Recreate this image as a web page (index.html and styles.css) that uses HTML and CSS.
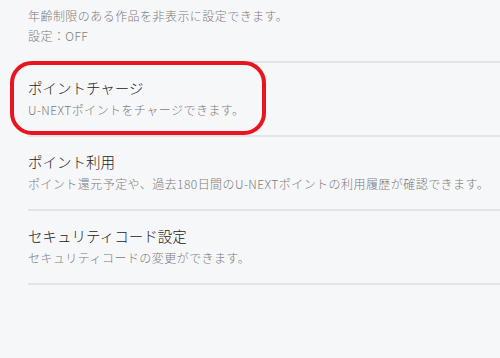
FILE: index.html
```html
<!DOCTYPE html>
<html>
<head>
<meta charset="utf-8">
<meta name="viewport" content="width=device-width, initial-scale=1.0">
<title>設定</title>
<link rel="stylesheet" href="styles.css">
</head>
<body>

  <div class="settings">
    <div class="setting-top">
      <p class="setting-desc">年齢制限のある作品を非表示に設定できます。</p>
      <p class="setting-desc">設定：OFF</p>
    </div>

    <div class="setting-item">
      <div class="highlight"></div>
      <p class="setting-title">ポイントチャージ</p>
      <p class="setting-desc">U-NEXTポイントをチャージできます。</p>
    </div>

    <div class="setting-item">
      <p class="setting-title">ポイント利用</p>
      <p class="setting-desc">ポイント還元予定や、過去180日間のU-NEXTポイントの利用履歴が確認できます。</p>
    </div>

    <div class="setting-item">
      <p class="setting-title">セキュリティコード設定</p>
      <p class="setting-desc">セキュリティコードの変更ができます。</p>
    </div>
  </div>

</body>
</html>
```

FILE: styles.css
```css
html, body {
  height: 100%;
  margin: 0;
  padding: 0;
  overflow: hidden;
}

body {
  background: #f6f7f9;
  font-family: "Noto Sans CJK JP", "Noto Sans", sans-serif;
}

p {
  margin: 0;
}

.settings {
  margin-left: 28px;
}

.setting-top {
  padding: 6px 0 15px;
}

.setting-top .setting-desc {
  line-height: 20px;
}

.setting-item {
  position: relative;
  border-top: 2px solid #e3e4e7;
  padding: 14px 0;
}

.setting-item:last-child {
  border-bottom: 2px solid #e3e4e7;
}

.setting-title {
  font-size: 14.5px;
  font-weight: 300;
  line-height: 22px;
  color: #222;
}

.setting-desc {
  font-size: 12px;
  font-weight: 300;
  line-height: 22px;
  letter-spacing: 0.45px;
  color: #7c7c7c;
  white-space: nowrap;
}

/* red marker round the charge item */
.highlight {
  position: absolute;
  top: -2px;
  left: -18px;
  width: 248px;
  height: 66px;
  border: 4px solid #e8141e;
  border-radius: 22px;
}
```
